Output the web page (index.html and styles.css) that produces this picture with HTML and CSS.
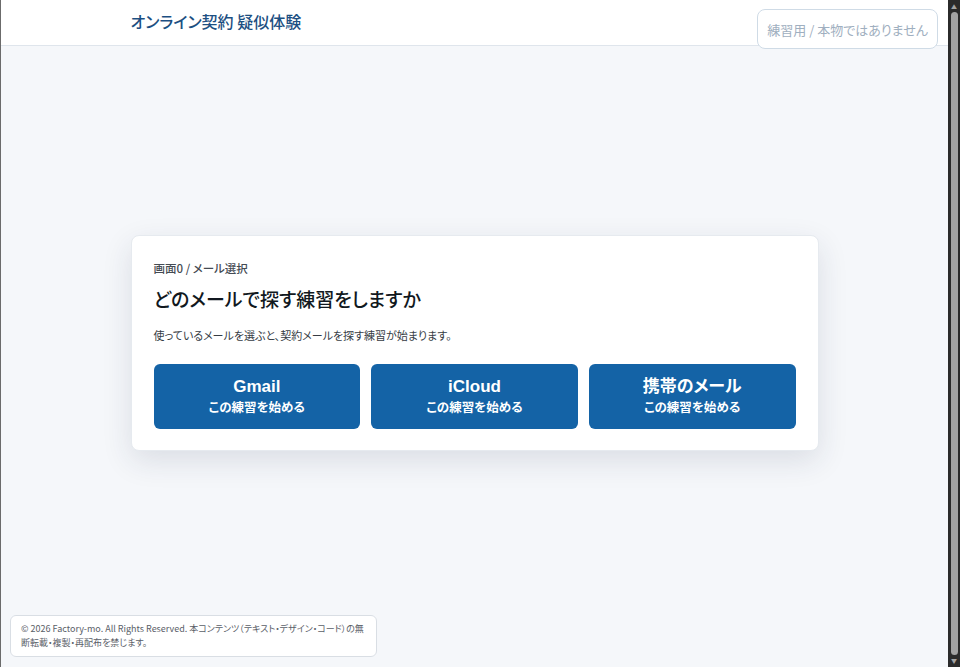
FILE: index.html
```html
<!DOCTYPE html>
<html lang="ja">
    <head>
        <meta charset="utf-8">
        <title>オンライン契約 疑似体験</title>
        <link rel="stylesheet" href="styles.css">
    </head>
    <body>
        <div class="page">
            <header class="site-header">
                <div class="header-inner">
                    <span class="site-title">オンライン契約 疑似体験</span>
                </div>
            </header>

            <main class="main">
                <section class="card">
                    <p class="crumb">画面0 / メール選択</p>
                    <h1 class="card-title">どのメールで探す練習をしますか</h1>
                    <p class="card-text">使っているメールを選ぶと、契約メールを探す練習が始まります。</p>
                    <div class="choices">
                        <button class="choice" type="button">
                            <span class="choice-name">Gmail</span>
                            <span class="choice-sub">この練習を始める</span>
                        </button>
                        <button class="choice" type="button">
                            <span class="choice-name">iCloud</span>
                            <span class="choice-sub">この練習を始める</span>
                        </button>
                        <button class="choice" type="button">
                            <span class="choice-name">携帯のメール</span>
                            <span class="choice-sub">この練習を始める</span>
                        </button>
                    </div>
                </section>
            </main>
        </div>
        <!-- window scrollbar as in the capture -->
        <div class="scrollbar" aria-hidden="true">
            <span class="scroll-arrow">▲</span>
            <span class="scroll-thumb"></span>
            <span class="scroll-arrow">▼</span>
        </div>

        <div class="practice-badge">練習用 / 本物ではありません</div>
        <footer class="copyright">
            © 2026 Factory-mo. All Rights Reserved. 本コンテンツ（テキスト・デザイン・コード）の無断転載・複製・再配布を禁じます。
        </footer>
    </body>
</html>
```

FILE: styles.css
```css
html, body {
    margin: 0;
    height: 100%;
    overflow: hidden;
}
body {
    display: flex;
    font-family: "Noto Sans CJK JP", "Noto Sans", sans-serif;
    font-feature-settings: "palt";
    color: #1a1f26;
    background: #f5f7fa;
}
.page {
    flex: 1;
    height: 100vh;
    overflow: hidden;
    border-left: 1px solid #6b6b6b;
    box-sizing: border-box;
}
.scrollbar {
    width: 12px;
    flex-shrink: 0;
    background: #2b2b2b;
    display: flex;
    flex-direction: column;
    align-items: center;
    padding: 2px 0;
    box-sizing: border-box;
}
.scroll-arrow {
    font-size: 6px;
    line-height: 9px;
    color: #a3a3a3;
}
.scroll-thumb {
    flex: 1;
    width: 7px;
    margin: 1px 0;
    background: #a3a3a3;
    border-radius: 4px;
}
.site-header {
    height: 45px;
    background: #fff;
    border-bottom: 1px solid #dfe5ec;
    display: flex;
    align-items: center;
}
.header-inner {
    width: 688px;
    margin: 0 auto;
}
.site-title {
    font-size: 16px;
    font-weight: 500;
    color: #1c4f82;
    position: relative;
    top: -2px;
}
.practice-badge {
    position: fixed;
    top: 9px;
    right: 22px;
    height: 38px;
    padding: 0 9px;
    display: flex;
    align-items: center;
    font-size: 13px;
    font-feature-settings: "palt";
    color: #9fafc0;
    background: #fff;
    border: 1px solid #cfdbe6;
    border-radius: 8px;
}
.main {
    min-height: calc(100vh - 30px);
    box-sizing: border-box;
    padding: 24px 0 67px;
    display: flex;
    align-items: center;
    justify-content: center;
}
.card {
    width: 688px;
    box-sizing: border-box;
    padding: 23px 22px 21px;
    background: #fff;
    border: 1px solid #e6eaef;
    border-radius: 8px;
    box-shadow: 0 10px 30px rgba(30, 45, 70, 0.12);
}
.crumb {
    margin: 0;
    font-size: 11.5px;
    line-height: 18px;
    font-weight: 500;
    color: #454b53;
}
.card-title {
    margin: 8px 0 0;
    font-size: 19px;
    line-height: 28px;
    font-weight: 500;
    color: #111820;
}
.card-text {
    margin: 13px 0 0;
    font-size: 11px;
    line-height: 18px;
    color: #363c44;
}
.choices {
    margin-top: 20px;
    display: grid;
    grid-template-columns: repeat(3, 1fr);
    gap: 11px;
}
.choice {
    display: flex;
    flex-direction: column;
    align-items: center;
    gap: 1px;
    padding: 12px 8px;
    border: 0;
    border-radius: 6px;
    background: #1463a6;
    color: #fff;
    font-family: "Liberation Sans", "Noto Sans CJK JP", sans-serif;
    font-feature-settings: "palt";
    font-weight: 700;
    cursor: pointer;
}
.choice-name {
    font-size: 17px;
    line-height: 22px;
}
.choice-sub {
    font-size: 12.5px;
    line-height: 18px;
}
.copyright {
    position: fixed;
    left: 10px;
    bottom: 10px;
    width: 367px;
    box-sizing: border-box;
    padding: 6px 4px 6px 10px;
    font-size: 9px;
    line-height: 14px;
    color: #5a6068;
    background: #fff;
    border: 1px solid #d9dee4;
    border-radius: 6px;
}
```
